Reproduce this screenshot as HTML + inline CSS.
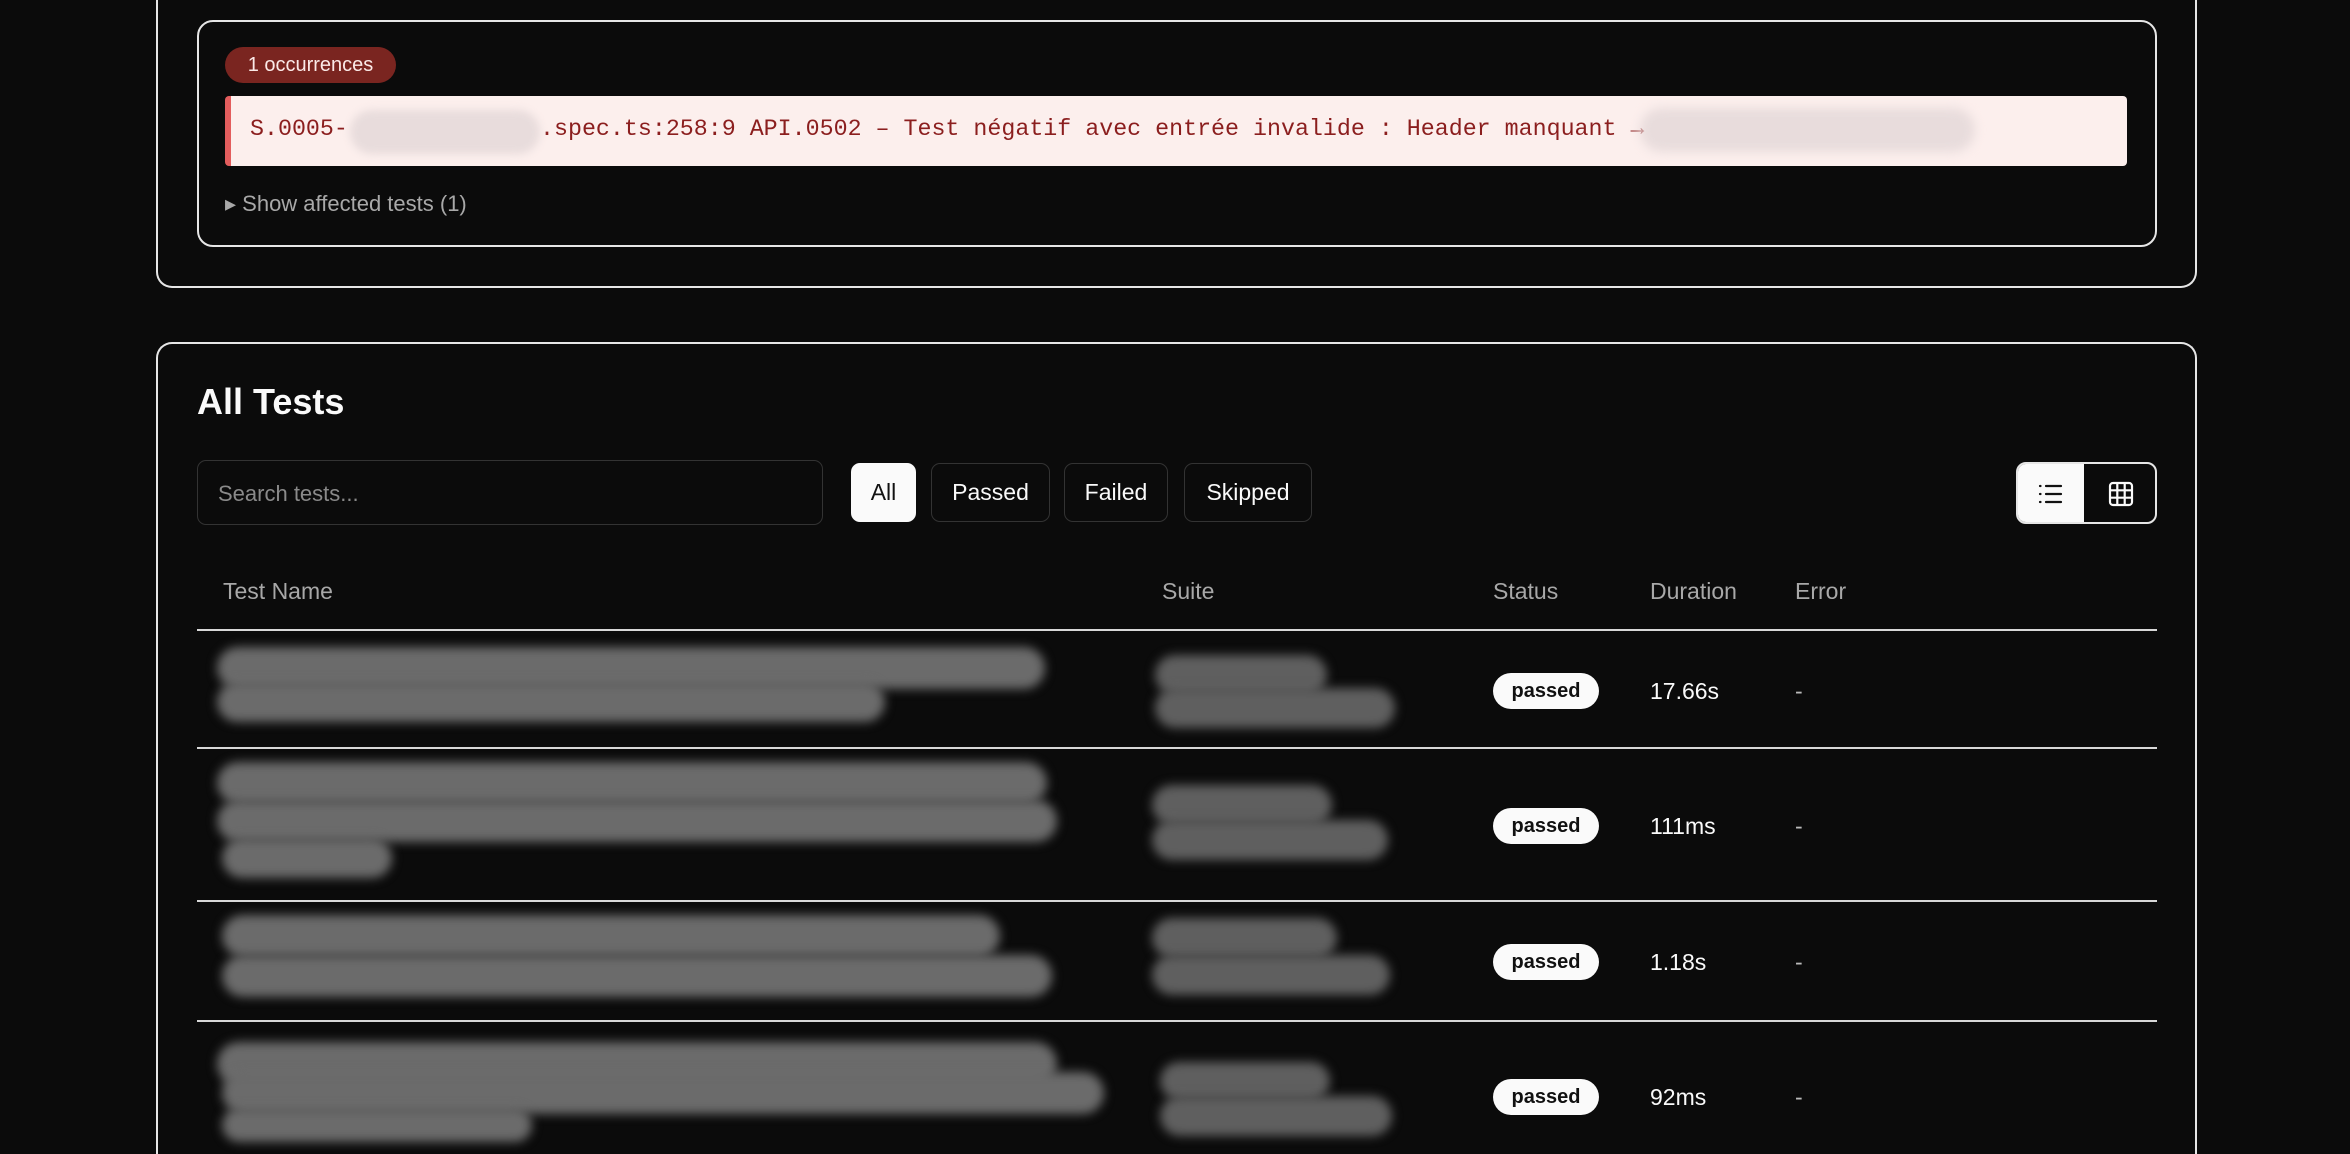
<!DOCTYPE html>
<html><head><meta charset="utf-8"><style>
*{box-sizing:border-box;margin:0;padding:0}
html,body{width:2350px;height:1154px;overflow:hidden}
body{background:#0b0b0b;font-family:"Liberation Sans",sans-serif;color:#fafafa;position:relative}
#w{position:absolute;left:0;top:0;width:2350px;height:1154px;overflow:hidden}
.abs{position:absolute}
.card{position:absolute;border:2px solid #e6e6e6;border-radius:16px}
.blob{position:absolute;background:#6b6b6b;border-radius:30px;filter:blur(5px)}
.blobs{position:absolute;background:#5f5f5f;border-radius:20px;filter:blur(5px)}
.btn{position:absolute;top:463px;height:59px;border:1.5px solid #333;border-radius:9px;font-size:23px;display:flex;align-items:center;justify-content:center;color:#fafafa}
.th{position:absolute;top:578px;font-size:23px;color:#a8a8a8}
.line{position:absolute;left:197px;width:1960px;height:2px;background:#d8d8d8}
.pill{position:absolute;left:1493px;width:106px;height:36px;background:#fafafa;color:#111;border-radius:18px;font-size:20px;font-weight:bold;display:flex;align-items:center;justify-content:center}
.dur{position:absolute;left:1650px;font-size:23px}
.dash{position:absolute;left:1795px;font-size:23px;color:#bbb}
.mono{position:absolute;top:116px;font-family:'Liberation Mono',monospace;font-size:23.3px;color:#8b1e1e;white-space:pre}
</style></head><body><div id="w">
<div class="card" style="left:156px;top:0;width:2041px;height:288px;border-top:none;border-top-left-radius:0;border-top-right-radius:0"></div>
<div class="card" style="left:197px;top:20px;width:1960px;height:227px"></div>
<div class="abs" style="left:225px;top:47px;width:171px;height:36px;border-radius:18px;background:#7a2520;color:#fbe9e7;font-size:20px;display:flex;align-items:center;justify-content:center">1 occurrences</div>
<div class="abs" style="left:225px;top:96px;width:1902px;height:70px;background:#fcefed;border-left:6px solid #e35d5d;border-radius:4px"></div>
<div class="mono" style="left:250px">S.0005-</div>
<div class="mono" style="left:540px">.spec.ts:258:9 API.0502 – Test négatif avec entrée invalide : Header manquant →</div>
<div class="abs" style="left:350px;top:110px;width:190px;height:44px;background:#e8dcdc;border-radius:22px;filter:blur(4px)"></div>
<div class="abs" style="left:1640px;top:108px;width:335px;height:44px;background:#e8dcdc;border-radius:22px;filter:blur(5px)"></div>
<div class="abs" style="left:225px;top:191px;font-size:22px;color:#a8a8a8">▸ Show affected tests (1)</div>

<div class="card" style="left:156px;top:342px;width:2041px;height:812px;border-bottom:none;border-bottom-left-radius:0;border-bottom-right-radius:0"></div>
<div class="abs" style="left:197px;top:381px;font-size:36px;font-weight:bold">All Tests</div>
<div class="abs" style="left:197px;top:460px;width:626px;height:65px;border:1.5px solid #333;border-radius:9px;font-size:22px;color:#8a8a8a;padding:20px 0 0 20px">Search tests...</div>
<div class="btn" style="left:851px;width:65px;background:#fafafa;color:#111;border-color:#fafafa">All</div>
<div class="btn" style="left:931px;width:119px">Passed</div>
<div class="btn" style="left:1064px;width:104px">Failed</div>
<div class="btn" style="left:1184px;width:128px">Skipped</div>
<div class="abs" style="left:2016px;top:462px;width:141px;height:62px;border:2px solid #e6e6e6;border-radius:10px;overflow:hidden">
 <div class="abs" style="left:0;top:0;width:66px;height:60px;background:#fafafa"></div>
 <svg class="abs" style="left:20px;top:18px" width="26" height="24" viewBox="0 0 26 24" fill="none" stroke="#111" stroke-width="2.2" stroke-linecap="round"><path d="M8 4h15M8 12h15M8 20h15M2 4h.5M2 12h.5M2 20h.5"/></svg>
 <svg class="abs" style="left:90px;top:17px" width="26" height="26" viewBox="0 0 26 26" fill="none" stroke="#fafafa" stroke-width="2.2"><rect x="2" y="2" width="22" height="22" rx="3"/><path d="M9.3 2v22M16.7 2v22M2 9.3h22M2 16.7h22"/></svg>
</div>
<div class="th" style="left:223px">Test Name</div>
<div class="th" style="left:1162px">Suite</div>
<div class="th" style="left:1493px">Status</div>
<div class="th" style="left:1650px">Duration</div>
<div class="th" style="left:1795px">Error</div>
<div class="line" style="top:629px"></div>
<div class="line" style="top:747px"></div>
<div class="line" style="top:900px"></div>
<div class="line" style="top:1020px"></div>

<div class="blob" style="left:217px;top:647px;width:828px;height:42px"></div>
<div class="blob" style="left:217px;top:682px;width:668px;height:40px"></div>
<div class="blobs" style="left:1155px;top:655px;width:172px;height:40px"></div>
<div class="blobs" style="left:1155px;top:688px;width:240px;height:40px"></div>
<div class="pill" style="top:673px">passed</div><div class="dur" style="top:678px">17.66s</div><div class="dash" style="top:678px">-</div>

<div class="blob" style="left:217px;top:762px;width:830px;height:42px"></div>
<div class="blob" style="left:217px;top:800px;width:840px;height:42px"></div>
<div class="blob" style="left:222px;top:838px;width:170px;height:40px"></div>
<div class="blobs" style="left:1152px;top:785px;width:180px;height:40px"></div>
<div class="blobs" style="left:1152px;top:820px;width:236px;height:40px"></div>
<div class="pill" style="top:808px">passed</div><div class="dur" style="top:813px">111ms</div><div class="dash" style="top:813px">-</div>

<div class="blob" style="left:222px;top:915px;width:778px;height:42px"></div>
<div class="blob" style="left:222px;top:955px;width:830px;height:42px"></div>
<div class="blobs" style="left:1152px;top:918px;width:185px;height:40px"></div>
<div class="blobs" style="left:1152px;top:955px;width:238px;height:40px"></div>
<div class="pill" style="top:944px">passed</div><div class="dur" style="top:949px">1.18s</div><div class="dash" style="top:949px">-</div>

<div class="blob" style="left:217px;top:1042px;width:840px;height:44px"></div>
<div class="blob" style="left:222px;top:1072px;width:882px;height:42px"></div>
<div class="blob" style="left:222px;top:1108px;width:310px;height:34px"></div>
<div class="blobs" style="left:1160px;top:1062px;width:170px;height:38px"></div>
<div class="blobs" style="left:1160px;top:1096px;width:232px;height:40px"></div>
<div class="pill" style="top:1079px">passed</div><div class="dur" style="top:1084px">92ms</div><div class="dash" style="top:1084px">-</div>
</div></body></html>
